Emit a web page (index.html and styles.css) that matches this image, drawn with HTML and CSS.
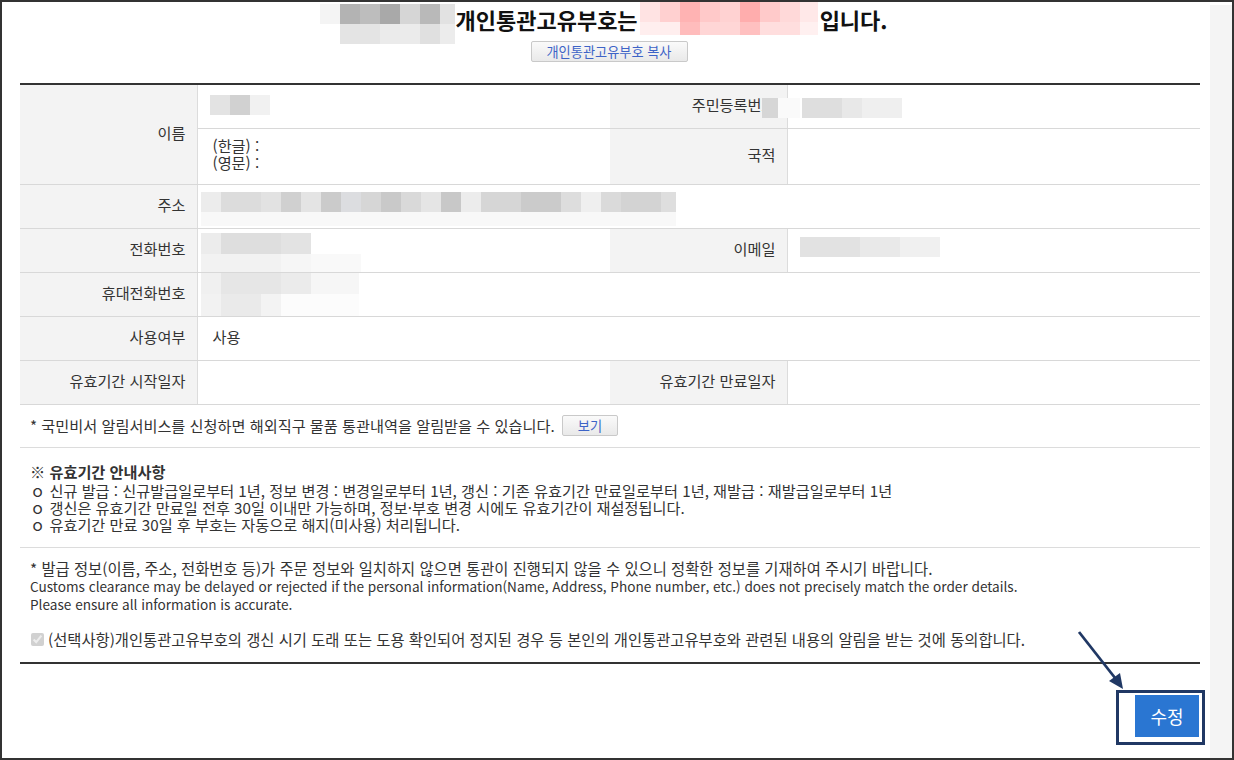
FILE: index.html
```html
<!DOCTYPE html>
<html lang="ko">
<head>
<meta charset="utf-8">
<title>개인통관고유부호</title>
<link rel="stylesheet" href="styles.css">
</head>
<body>
<div class="frame">
  <div class="main">
    <div class="title-row">
      <span class="blur blur-title-gray"></span>
      <span class="title">개인통관고유부호는</span>
      <span class="blur blur-title-pink"></span>
      <span class="title">입니다.</span>
    </div>
    <div class="copy-row"><button class="btn-light btn-copy">개인통관고유부호 복사</button></div>

    <table class="info">
      <colgroup>
        <col class="c-label"><col class="c-val"><col class="c-label2"><col class="c-val2">
      </colgroup>
      <tr class="r-std">
        <th rowspan="2">이름</th>
        <td class="td-blur"><span class="blur blur-name"></span></td>
        <th class="rrn-label">주민등록번호<span class="blur blur-rrn-cover"></span></th>
        <td class="td-blur"><span class="blur blur-rrn"></span></td>
      </tr>
      <tr class="r-tall">
        <td><div class="two-line">(한글) :<br>(영문) :</div></td>
        <th>국적</th>
        <td></td>
      </tr>
      <tr class="r-std">
        <th>주소</th>
        <td colspan="3" class="td-blur"><span class="blur blur-addr"></span></td>
      </tr>
      <tr class="r-std">
        <th>전화번호</th>
        <td class="td-blur"><span class="blur blur-phone"></span></td>
        <th>이메일</th>
        <td class="td-blur"><span class="blur blur-email"></span></td>
      </tr>
      <tr class="r-std">
        <th>휴대전화번호</th>
        <td colspan="3" class="td-blur"><span class="blur blur-mobile"></span></td>
      </tr>
      <tr class="r-std">
        <th>사용여부</th>
        <td colspan="3">사용</td>
      </tr>
      <tr class="r-std">
        <th>유효기간 시작일자</th>
        <td></td>
        <th>유효기간 만료일자</th>
        <td></td>
      </tr>
    </table>

    <div class="notice">* 국민비서 알림서비스를 신청하면 해외직구 물품 통관내역을 알림받을 수 있습니다. <button class="btn-light btn-view">보기</button></div>

    <div class="guide">
      <p class="guide-title">※ 유효기간 안내사항</p>
      <p class="guide-item">ｏ 신규 발급 : 신규발급일로부터 1년, 정보 변경 : 변경일로부터 1년, 갱신 : 기존 유효기간 만료일로부터 1년, 재발급 : 재발급일로부터 1년</p>
      <p class="guide-item">ｏ 갱신은 유효기간 만료일 전후 30일 이내만 가능하며, 정보·부호 변경 시에도 유효기간이 재설정됩니다.</p>
      <p class="guide-item">ｏ 유효기간 만료 30일 후 부호는 자동으로 해지(미사용) 처리됩니다.</p>
    </div>

    <div class="caution">
      <p>* 발급 정보(이름, 주소, 전화번호 등)가 주문 정보와 일치하지 않으면 통관이 진행되지 않을 수 있으니 정확한 정보를 기재하여 주시기 바랍니다.</p>
      <p class="en">Customs clearance may be delayed or rejected if the personal information(Name, Address, Phone number, etc.) does not precisely match the order details.</p>
      <p class="en">Please ensure all information is accurate.</p>
      <label class="agree"><input type="checkbox" checked disabled>(선택사항)개인통관고유부호의 갱신 시기 도래 또는 도용 확인되어 정지된 경우 등 본인의 개인통관고유부호와 관련된 내용의 알림을 받는 것에 동의합니다.</label>
    </div>

    <div class="actions">
      <div class="highlight"><button class="btn-primary">수정</button></div>
    </div>

    <svg class="arrow" width="60" height="70" viewBox="0 0 60 70">
      <line x1="4" y1="4" x2="44" y2="55" stroke="#203864" stroke-width="2.8"/>
      <polygon points="48,61 34,53 45,45" fill="#203864"/>
    </svg>
  </div>
  <div class="strip"></div>
</div>
</body>
</html>
```

FILE: styles.css
```css
* { box-sizing: border-box; }
html, body { margin: 0; padding: 0; background: #fff; }
body {
  font-family: "Noto Sans CJK KR", "Noto Sans", sans-serif;
  font-size: 15.2px;
  color: #333;
}
.frame {
  width: 1234px;
  height: 760px;
  border: 2px solid #333;
  display: flex;
  overflow: hidden;
}
.main {
  position: relative;
  width: 1208px;
  padding-left: 18px;
  padding-right: 10px;
}
.strip {
  flex: 1;
  background: #f4f4f4;
  margin-top: 3px;
}

/* title */
.title-row {
  height: 36px;
  display: flex;
  justify-content: center;
  align-items: flex-start;
  padding-right: 12px;
}
.title {
  font-size: 22px;
  font-weight: 700;
  color: #111;
  line-height: 35px;
}
.blur { display: inline-block; }
.blur-title-gray {
  width: 135px;
  height: 40px;
  margin-top: 2px;
  background:
    linear-gradient(90deg, #f4f4f4 0 20px, #b3b3b3 20px 40px, #bdbdbd 40px 60px, #a9a9a9 60px 80px, #d6d6d6 80px 100px, #b9b9b9 100px 120px, #e2e2e2 120px 135px) top / 100% 20px no-repeat,
    linear-gradient(90deg, #fff 0 20px, #e4e4e4 20px 60px, #ebebeb 60px 100px, #e0e0e0 100px 120px, #ececec 120px 135px) bottom / 100% 20px no-repeat;
}
.blur-title-pink {
  width: 178px;
  height: 33px;
  margin: 0 2px;
  background:
    linear-gradient(90deg, #ffe3e3 0 20px, #ffd0d0 20px 40px, #ffb3b3 40px 60px, #ffc9c9 60px 80px, #ffd2d2 80px 100px, #ffadad 100px 120px, #ffcaca 120px 140px, #ffd9d9 140px 160px, #ffe8e8 160px 178px) top / 100% 20px no-repeat,
    linear-gradient(90deg, #ffeeee 0 40px, #ffbcbc 40px 60px, #ffd6d6 60px 100px, #ffc0c0 100px 120px, #ffdede 120px 160px, #fff0f0 160px 178px) bottom / 100% 13px no-repeat;
}

.copy-row {
  display: flex;
  justify-content: center;
  margin-top: 3px;
  padding-right: 2px;
}
.btn-light {
  font-family: "Noto Sans CJK KR", sans-serif;
  background: linear-gradient(#fafafa, #e9e9e9);
  border: 1px solid #c9c9c9;
  border-radius: 2px;
  color: #3d63c7;
  padding: 0;
  cursor: pointer;
}
.btn-copy {
  width: 157px;
  height: 21px;
  font-size: 13.2px;
  line-height: 19px;
}

/* table */
.info {
  margin-top: 21px;
  width: 1180px;
  border-collapse: collapse;
  table-layout: fixed;
  border-top: 2px solid #333;
}
.c-label { width: 177px; }
.c-val { width: 413px; }
.c-label2 { width: 177px; }
.c-val2 { width: 413px; }
.info th, .info td {
  border-bottom: 1px solid #d8d8d8;
  padding: 0 0 4px;
  vertical-align: middle;
  font-size: 15.2px;
}
.info th {
  background: #f3f3f3;
  font-weight: 400;
  text-align: right;
  padding-right: 11px;
  border-right: 1px solid #dcdcdc;
}
.info td { padding-left: 15px; text-align: left; }
.info td.td-blur { vertical-align: top; padding-bottom: 0; }
.td-blur .blur { display: block; }
.r-std { height: 44px; }
.r-tall { height: 56px; }
.two-line { line-height: 17px; }
.rrn-label { position: relative; }
.blur-rrn-cover {
  position: absolute;
  left: 152px;
  top: 13px;
  width: 38px;
  height: 20px;
  background: linear-gradient(90deg, #d6d6d6 0 16px, #fafafa 16px 38px);
}
.blur-name {
  margin: 10px 0 0 -3px;
  width: 60px;
  height: 20px;
  background: linear-gradient(90deg, #e3e3e3 0 20px, #d1d1d1 20px 40px, #f1f1f1 40px 60px);
}
.blur-rrn {
  margin: 13px 0 0 -1px;
  width: 100px;
  height: 20px;
  background: linear-gradient(90deg, #dedede 0 40px, #e8e8e8 40px 60px, #efefef 60px 100px);
}
.blur-addr {
  margin: 7px 0 0 -12px;
  width: 475px;
  height: 34px;
  background:
    linear-gradient(90deg, #ececec 0 20px, #dcdcdc 20px 60px, #e2e2e2 60px 80px, #d0d0d0 80px 100px, #e4e4e4 100px 120px, #cbcbcb 120px 140px, #dcdde0 140px 160px, #d6d6d6 160px 180px, #c9c9c9 180px 200px, #d9d9d9 200px 220px, #e5e5e5 220px 240px, #c8c8c8 240px 260px, #ececec 260px 280px, #d6d6d6 280px 320px, #cbcbcb 320px 360px, #dddddd 360px 380px, #efefef 380px 400px, #dadada 400px 420px, #d3d3d3 420px 460px, #dedede 460px 475px) top / 100% 20px no-repeat,
    linear-gradient(#f8f8f8, #f8f8f8) bottom / 100% 14px no-repeat;
}
.blur-phone {
  margin: 4px 0 0 -12px;
  width: 160px;
  height: 39px;
  background:
    linear-gradient(90deg, #ececec 0 20px, #dedede 20px 80px, #e3e3e3 80px 110px, transparent 110px 160px) top / 100% 21px no-repeat,
    linear-gradient(90deg, #f2f2f2 0 80px, #f6f6f6 80px 110px, #f9f9f9 110px 160px) bottom / 100% 18px no-repeat;
}
.blur-email {
  margin: 8px 0 0 -3px;
  width: 140px;
  height: 20px;
  background: linear-gradient(90deg, #e2e2e2 0 60px, #e9e9e9 60px 100px, #f0f0f0 100px 140px);
}
.blur-mobile {
  margin: 0 0 0 -12px;
  width: 158px;
  height: 43px;
  background:
    linear-gradient(90deg, #f0f0f0 0 20px, #e6e6e6 20px 80px, #ebebeb 80px 110px, #f6f6f6 110px 158px) top / 100% 21px no-repeat,
    linear-gradient(90deg, #f2f2f2 0 20px, #eaeaea 20px 60px, #f3f3f3 60px 80px, #fcfcfc 80px 158px) bottom / 100% 22px no-repeat;
}

/* notice blocks */
.notice {
  width: 1180px;
  padding: 10px 10px 11px;
  line-height: 21px;
  border-bottom: 1px solid #dcdcdc;
}
.btn-view {
  width: 56px;
  height: 21px;
  font-size: 13.2px;
  line-height: 19px;
  margin-left: 3px;
  vertical-align: top;
}
.guide {
  width: 1180px;
  padding: 15px 10px 14px;
  border-bottom: 1px solid #dcdcdc;
}
.guide p { margin: 0; line-height: 17px; }
.guide-title { font-weight: 700; margin-bottom: 2px !important; }
.caution {
  width: 1180px;
  padding: 11px 10px 14px;
  border-bottom: 2px solid #333;
  font-size: 15.35px;
}
.caution p { margin: 0; line-height: 18px; }
.caution .en { font-size: 13.6px; }
.agree {
  display: flex;
  align-items: center;
  margin-top: 18px;
  line-height: 17px;
}
.agree input {
  margin: 0 4px 0 1px;
  width: 13px;
  height: 13px;
}

.actions {
  width: 1185px;
  display: flex;
  justify-content: flex-end;
  margin-top: 26px;
}
.highlight {
  border: 3px solid #203864;
  padding: 2px 3px 5px 16px;
}
.btn-primary {
  display: block;
  width: 64px;
  height: 42px;
  background: #2a76d2;
  border: 0;
  color: #fff;
  font-family: "Noto Sans CJK KR", sans-serif;
  font-size: 18px;
  padding: 0;
}
.arrow {
  position: absolute;
  left: 1073px;
  top: 626px;
}
```
